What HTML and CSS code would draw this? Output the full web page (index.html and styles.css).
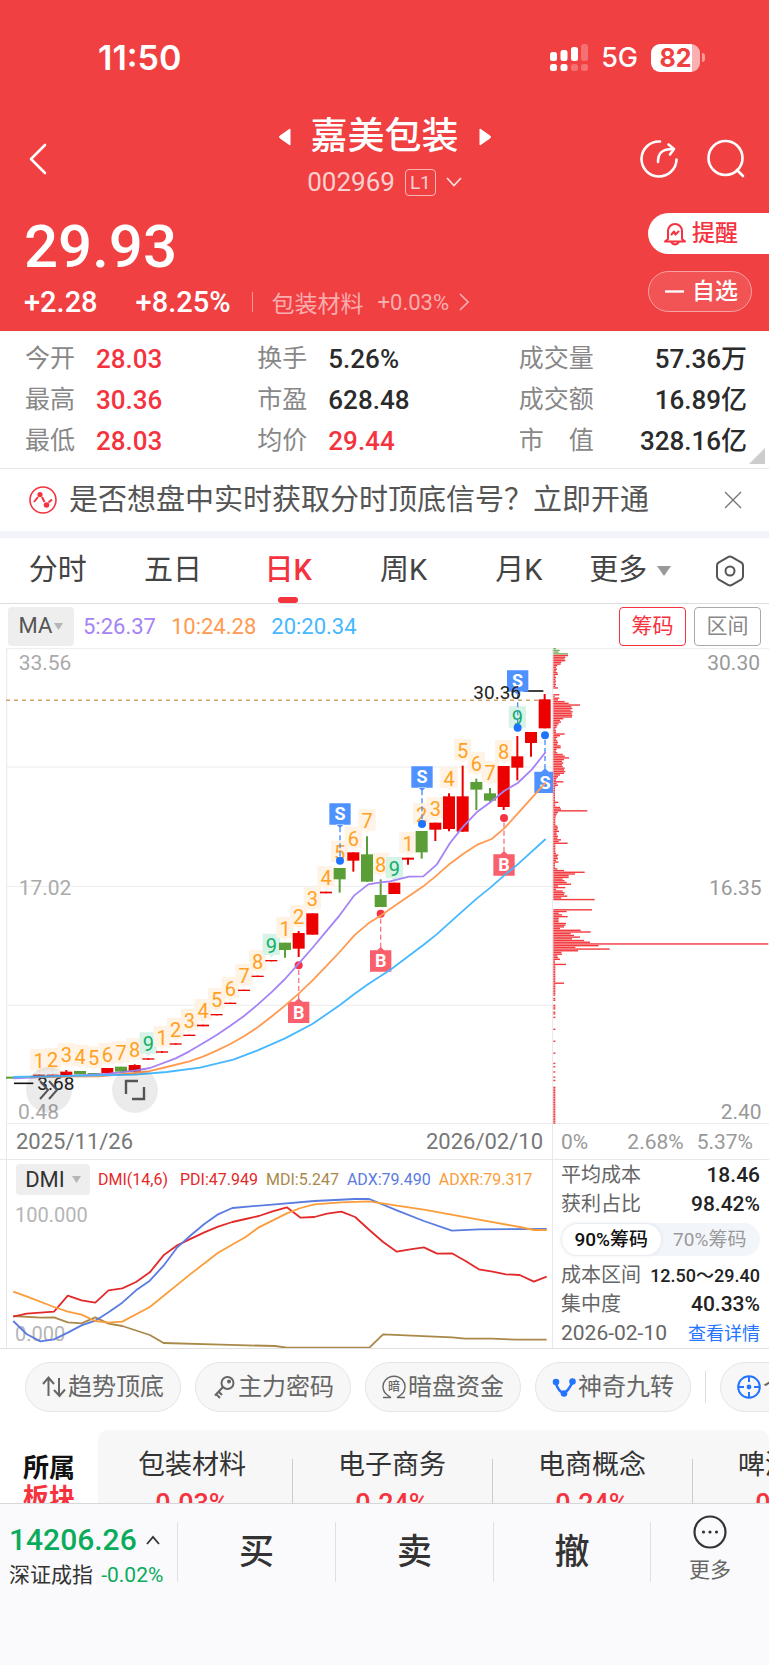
FILE: index.html
```html
<!DOCTYPE html>
<html lang="zh-CN">
<head>
<meta charset="utf-8">
<meta name="viewport" content="width=device-width, initial-scale=1">
<title>嘉美包装 002969</title>
<link rel="stylesheet" href="styles.css">
</head>
<body>
<div class="app">
  <header class="header">
    <div class="status">
      <time class="clock">11:50</time>
      <div class="status-right">
        <svg width="38" height="28" viewBox="0 0 38 28" fill="#fff" aria-hidden="true">
          <rect x="0" y="8" width="7" height="9" rx="2.5"/><rect x="10.500" y="6" width="7" height="11" rx="2.500"/><rect x="21" y="3" width="7" height="14" rx="2.500"/><rect x="31" y="0" width="7" height="17" rx="2.500" opacity=".25"/>
          <rect x="0" y="20" width="7" height="7" rx="2.500"/><rect x="10.500" y="20" width="7" height="7" rx="2.500"/><rect x="21" y="20" width="7" height="7" rx="2.500" opacity=".25"/><rect x="31" y="20" width="7" height="7" rx="2.500" opacity=".25"/>
        </svg>
        <span class="net">5G</span>
        <span class="battery">82</span>
      </div>
    </div>

    <div class="nav">
      <button class="icon-btn back" aria-label="返回"><svg width="18" height="32" viewBox="0 0 18 32"><path d="M16 2 2 16 16 30" fill="none" stroke="#fff" stroke-width="2.600" stroke-linecap="round" stroke-linejoin="round"/></svg></button>
      <div class="title-box">
        <div class="title-row">
          <button class="icon-btn" aria-label="上一只"><svg width="12" height="18" viewBox="0 0 12 18"><path d="M11 1v16L1 10q-1-1 0-2z" fill="#fff" stroke="#fff" stroke-linejoin="round"/></svg></button>
          <h1 class="title">嘉美包装</h1>
          <button class="icon-btn" aria-label="下一只"><svg width="12" height="18" viewBox="0 0 12 18"><path d="M1 1v16l10-7q1-1 0-2z" fill="#fff" stroke="#fff" stroke-linejoin="round"/></svg></button>
        </div>
        <div class="code-row">
          <span class="code">002969</span><span class="level">L1</span>
          <svg width="16" height="10" viewBox="0 0 16 10"><path d="M1 1l7 7.500L15 1" fill="none" stroke="#fff" stroke-width="1.600" opacity=".85"/></svg>
        </div>
      </div>
      <div class="nav-actions">
        <button class="icon-btn" aria-label="分享"><svg width="38" height="38" viewBox="0 0 38 38" fill="none" stroke="#fff" stroke-width="2.600" stroke-linecap="round" stroke-linejoin="round"><path d="M20 1.500A17.500 17.500 0 1 0 36.500 19.500"/><path d="M18 22c0-9 4-13 15-13"/><path d="M28.500 4.500 34 9l-4 5.500"/></svg></button>
        <button class="icon-btn" aria-label="搜索"><svg width="38" height="40" viewBox="0 0 38 40" fill="none" stroke="#fff" stroke-width="2.600" stroke-linecap="round"><circle cx="18.500" cy="19" r="17"/><path d="m30 31 6 6"/></svg></button>
      </div>
    </div>

    <div class="quote">
      <div class="quote-main">
        <div class="price">29.93</div>
        <div class="change-row">
          <span class="change">+2.28</span><span class="change">+8.25%</span>
          <a class="sector" href="#sector"><span class="sector-name">包装材料</span><span>+0.03%</span><svg width="10" height="18" viewBox="0 0 10 18"><path d="m1 1 8 8-8 8" fill="none" stroke="currentColor" stroke-width="1.600"/></svg></a>
        </div>
      </div>
      <div class="quote-actions">
        <button class="remind"><svg width="22" height="24" viewBox="0 0 22 24" fill="none" stroke="#f5333f" stroke-width="2" stroke-linejoin="round" stroke-linecap="round"><path d="M4 17V9a7 7 0 0 1 14 0v8l3 2.500H1z"/><path d="M7.500 20.500q3.500 4 7 0M7.500 12.500l2.500-3 1.500 3 3-3"/></svg>提醒</button>
        <button class="watch"><svg width="19" height="3" viewBox="0 0 19 3"><path d="M0 1.500h19" stroke="#fff" stroke-width="2.400"/></svg>自选</button>
      </div>
    </div>
  </header>

  <main class="main">
    <dl class="stats">
      <div class="stat"><dt>今开</dt><dd class="up">28.03</dd></div>
      <div class="stat"><dt>换手</dt><dd>5.26%</dd></div>
      <div class="stat wide"><dt>成交量</dt><dd>57.36万</dd></div>
      <div class="stat"><dt>最高</dt><dd class="up">30.36</dd></div>
      <div class="stat"><dt>市盈</dt><dd>628.48</dd></div>
      <div class="stat wide"><dt>成交额</dt><dd>16.89亿</dd></div>
      <div class="stat"><dt>最低</dt><dd class="up">28.03</dd></div>
      <div class="stat"><dt>均价</dt><dd class="up">29.44</dd></div>
      <div class="stat wide"><dt>市　值</dt><dd>328.16亿</dd></div>
    </dl>

    <div class="notice">
      <svg width="28" height="28" viewBox="0 0 28 28" fill="none" stroke="#f5333f" stroke-width="1.600"><circle cx="14" cy="14" r="13"/><path d="m5 16 4-5M13 11l2.500 5M19.500 16.500 23 13.500" stroke-width="2"/><circle cx="11" cy="8.500" r="1.800" fill="#f5333f"/><circle cx="17.500" cy="19" r="2" fill="#f5333f"/></svg>
      <a class="notice-text" href="#open">是否想盘中实时获取分时顶底信号？立即开通</a>
      <button class="icon-btn" aria-label="关闭"><svg width="18" height="18" viewBox="0 0 18 18"><path d="m1 1 16 16M17 1 1 17" stroke="#777" stroke-width="1.400"/></svg></button>
    </div>

    <nav class="tabs">
      <button class="tab">分时</button>
      <button class="tab">五日</button>
      <button class="tab active">日K</button>
      <button class="tab">周K</button>
      <button class="tab">月K</button>
      <button class="tab more">更多<svg width="14" height="10" viewBox="0 0 14 10"><path d="M0 0h14L7 10z" fill="#999"/></svg></button>
      <button class="tab" aria-label="设置"><svg width="30" height="32" viewBox="0 0 30 32" fill="none" stroke="#555" stroke-width="2" stroke-linejoin="round"><path d="M13 2.200q2-1.200 4 0l9.500 5.500q1.500 1 1.500 3v10.600q0 2-1.500 3L17 29.800q-2 1.200-4 0l-9.500-5.500q-1.500-1-1.500-3V10.700q0-2 1.500-3z"/><circle cx="15" cy="16" r="4.500"/></svg></button>
    </nav>

    <div class="ma-row">
      <button class="drop">MA<svg width="9" height="7" viewBox="0 0 9 7"><path d="M0 0h9L4.500 7z" fill="#b5b5b5"/></svg></button>
      <span class="ma5">5:26.37</span><span class="ma10">10:24.28</span><span class="ma20">20:20.34</span>
      <div class="ma-actions"><button class="outline on">筹码</button><button class="outline">区间</button></div>
    </div>

    <section class="kline">
      <svg class="chart" id="kline" viewBox="0 0 769 476" role="img" aria-label="日K线与筹码分布"></svg>
      <button class="round first" aria-label="快进"><svg width="22" height="22" viewBox="0 0 22 22"><path d="m2 2 8 9-8 9M11 2l8 9-8 9" fill="none" stroke="#555" stroke-width="2"/></svg></button>
      <button class="round second" aria-label="全屏"><svg width="22" height="22" viewBox="0 0 22 22"><path d="M14 2H2v13M20 8v12H8" fill="none" stroke="#555" stroke-width="2.400"/></svg></button>
    </section>

    <div class="split axis">
      <div class="dates"><span>2025/11/26</span><span>2026/02/10</span></div>
      <div class="percents"><span>0%</span><span class="mid">2.68%</span><span>5.37%</span></div>
    </div>

    <div class="split lower">
      <section class="dmi">
        <div class="dmi-head">
          <button class="drop small">DMI<svg width="9" height="7" viewBox="0 0 9 7"><path d="M0 0h9L4.500 7z" fill="#b5b5b5"/></svg></button>
          <span class="c-red">DMI(14,6)</span><span class="c-red wide-gap">PDI:47.949</span><span class="c-brown">MDI:5.247</span><span class="c-blue">ADX:79.490</span><span class="c-orange">ADXR:79.317</span>
        </div>
        <svg class="chart dmi-chart" id="dmi" viewBox="0 0 545 188" role="img" aria-label="DMI指标"></svg>
      </section>
      <section class="chips">
        <div class="chip-row"><span>平均成本</span><b>18.46</b></div>
        <div class="chip-row"><span>获利占比</span><b>98.42%</b></div>
        <div class="switch"><button class="on">90%筹码</button><button>70%筹码</button></div>
        <div class="chip-row"><span>成本区间</span><b class="range">12.50～29.40</b></div>
        <div class="chip-row"><span>集中度</span><b>40.33%</b></div>
        <div class="chip-row"><span class="day">2026-02-10</span><a href="#detail">查看详情</a></div>
      </section>
    </div>

    <div class="pills">
      <button class="pill"><svg width="24" height="24" viewBox="0 0 24 24" fill="none" stroke="#666" stroke-width="2"><path d="M6.500 21V3M1 9l5.500-6.500L12 9M17 3v18M12 15l5.500 6L23 14.500"/></svg>趋势顶底</button>
      <button class="pill"><svg width="24" height="24" viewBox="0 0 24 24" fill="none" stroke="#666" stroke-width="2"><circle cx="15.500" cy="8" r="6"/><circle cx="17" cy="6.500" r="1" fill="#666"/><path d="M11 12 3 20.500M6.500 16.500l3.500 3.500M3.500 18.500 8 23"/></svg>主力密码</button>
      <button class="pill"><svg width="24" height="24" viewBox="0 0 24 24" fill="none" stroke="#666" stroke-width="1.400"><path d="M6 20.500a11 10.500 0 1 1 12 0M1 22.500h8M15 22.500h8M6 20.500l3 2M18 20.500l-3 2"/><text x="12" y="16" text-anchor="middle" class="icon-text">暗</text></svg>暗盘资金</button>
      <button class="pill"><svg width="24" height="24" viewBox="0 0 24 24" fill="none" stroke="#2474ff" stroke-width="2.600"><path d="M4 8.500Q6 16 12 18.500 17 15 20.500 7"/><circle cx="4" cy="7" r="2" fill="#2474ff"/><circle cx="12" cy="18.500" r="2" fill="#2474ff"/><circle cx="20.500" cy="6.500" r="2" fill="#2474ff"/></svg>神奇九转</button>
      <i class="pill-line"></i>
      <button class="pill"><svg width="24" height="24" viewBox="0 0 24 24" fill="none" stroke="#2474ff" stroke-width="2"><circle cx="12" cy="12" r="10.800"/><path d="M12 1v6M12 17v6M1 12h6M17 12h6"/><circle cx="12" cy="12" r="1.400" fill="#2474ff"/></svg>个股诊断</button>
    </div>

    <section class="boards" id="sector">
      <h2 class="boards-title">所属<span>板块</span></h2>
      <div class="boards-card">
        <div class="board"><span>包装材料</span><b>0.03%</b></div>
        <div class="board"><span>电子商务</span><b>0.24%</b></div>
        <div class="board"><span>电商概念</span><b>0.24%</b></div>
        <div class="board"><span>啤酒概念</span><b>0.24%</b></div>
      </div>
    </section>
  </main>

  <footer class="footer">
    <button class="index">
      <span class="index-value">14206.26<svg width="14" height="10" viewBox="0 0 14 10"><path d="m1 9 6-7 6 7" fill="none" stroke="#333" stroke-width="1.800"/></svg></span>
      <span class="index-name">深证成指 <em>-0.02%</em></span>
    </button>
    <button class="trade">买</button>
    <button class="trade">卖</button>
    <button class="trade">撤</button>
    <button class="foot-more"><svg width="34" height="34" viewBox="0 0 34 34"><circle cx="17" cy="17" r="15.500" fill="none" stroke="#333" stroke-width="2.200"/><g fill="#333"><circle cx="10.500" cy="17" r="1.600"/><circle cx="17" cy="17" r="1.600"/><circle cx="23.500" cy="17" r="1.600"/></g></svg>更多</button>
  </footer>
</div>
<script src="charts.js"></script>
</body>
</html>
```

FILE: styles.css
```css
* { box-sizing: border-box; }

body {
  margin: 0;
  background: #fff;
  color: #333;
  font-family: Roboto, "Noto Sans CJK SC", sans-serif;
}

button {
  margin: 0;
  padding: 0;
  border: 0;
  background: none;
  color: inherit;
  font: inherit;
  line-height: 1;
}

a { color: inherit; text-decoration: none; }
svg { display: block; flex: none; }

.app { display: flex; flex-direction: column; height: 100vh; }

/* header */
.header { flex: none; background: #f04042; color: #fff; padding-bottom: 8px; }

.status {
  display: flex;
  justify-content: space-between;
  align-items: center;
  padding: 38px 69px 0 98px;
  height: 78px;
  font-family: Inter, sans-serif;
}
.clock { font-size: 34px; line-height: 40px; font-weight: 600; }
.status-right { display: flex; align-items: center; gap: 13px; }
.net { font-size: 27px; line-height: 32px; font-weight: 500; }
.battery {
  position: relative;
  width: 49px;
  height: 28px;
  border-radius: 9px;
  background: linear-gradient(90deg, #fff 84%, #f9b0b0 84%);
  color: #f04042;
  font-size: 25px;
  line-height: 28px;
  font-weight: 700;
  text-align: center;
}
.battery::after {
  content: "";
  position: absolute;
  right: -5px;
  top: 9px;
  width: 3px;
  height: 9px;
  border-radius: 0 4px 4px 0;
  background: #f79a9b;
}

.nav {
  display: grid;
  grid-template-columns: 1fr auto 1fr;
  align-items: center;
  padding: 34px 24px 0;
}
.icon-btn { display: flex; }
.back { padding-left: 5px; }
.back, .nav-actions { padding-top: 4px; }
.title-box { display: flex; flex-direction: column; align-items: center; }
.title-row { display: flex; align-items: center; gap: 20px; }
.title { margin: 0; font-size: 37px; line-height: 50px; font-weight: 500; }
.code-row { display: flex; align-items: center; gap: 10px; line-height: 40px; }
.code { font-size: 26px; color: #fbd0d0; }
.level {
  border: 1px solid #f9b5b5;
  border-radius: 4px;
  padding: 0 4px;
  font-size: 19px;
  line-height: 25px;
  color: #fbd0d0;
}
.nav-actions { display: flex; justify-content: flex-end; align-items: center; gap: 29px; }

.quote { display: flex; justify-content: space-between; padding-left: 24px; margin-top: 11px; }
.price { font-size: 60px; line-height: 68px; font-weight: 500; }
.change-row { display: flex; align-items: center; gap: 38px; height: 42px; }
.change { font-size: 29px; line-height: 42px; font-weight: 500; }
.change-row .sector { margin-left: -17px; }
.sector {
  display: flex;
  align-items: center;
  border-left: 1px solid #f79a9b;
  padding-left: 19px;
  gap: 10px;
  height: 20px;
  font-size: 22px;
  color: #f9adae;
}
.sector-name { font-size: 23px; margin-right: 4px; }
.quote-actions { display: flex; flex-direction: column; gap: 17px; width: 121px; }
.remind, .watch {
  display: flex;
  align-items: center;
  gap: 6px;
  height: 41px;
  padding-left: 16px;
  font-size: 23px;
  font-weight: 500;
}
.remind { background: #fff; color: #f5333f; border-radius: 21px 0 0 21px; }
.watch {
  width: 104px;
  gap: 8px;
  border: 1px solid #f8a2a3;
  border-radius: 21px;
  background: #f25355;
}

/* body */
.main { flex: 1; min-height: 0; overflow: hidden; display: flex; flex-direction: column; }
.main > * { flex: none; }

.stats {
  position: relative;
  display: grid;
  grid-template-columns: 232fr 261fr 228fr;
  row-gap: 1px;
  margin: 0;
  padding: 8px 22px 7px 25px;
  border-bottom: 1px solid #e8e8e8;
}
.stats::after {
  content: "";
  position: absolute;
  right: 4px;
  bottom: 4px;
  border-left: 16px solid transparent;
  border-bottom: 16px solid #ccc;
}
.stat { display: flex; align-items: center; gap: 21px; height: 40px; }
.stat.wide { justify-content: space-between; }
.stat dt { font-size: 25px; line-height: 36px; color: #888; }
.stat dd { margin: 0; font-size: 26px; line-height: 36px; font-weight: 500; color: #2b2b2b; }
.stat .up { color: #f5333f; }

.notice {
  display: flex;
  align-items: center;
  gap: 12px;
  height: 69px;
  padding: 0 27px 0 29px;
  border-bottom: 7px solid #f2f4f9;
}
.notice-text { flex: 1; font-size: 29px; line-height: 40px; color: #555; white-space: nowrap; }

.tabs {
  display: grid;
  grid-template-columns: repeat(5, 115fr) 115fr 77fr;
  height: 66px;
  border-bottom: 1px solid #ddd;
}
.tab {
  position: relative;
  display: flex;
  align-items: center;
  justify-content: center;
  font-size: 29px;
  color: #444;
}
.tab.more { gap: 10px; padding-right: 8px; }
.tab.active { color: #f5333f; font-weight: 500; }
.tab.active::after {
  content: "";
  position: absolute;
  bottom: 0;
  width: 20px;
  height: 6px;
  border-radius: 3px;
  background: #f5333f;
}

.ma-row { display: flex; align-items: center; gap: 15px; height: 44px; padding: 0 8px; font-size: 22px; }
.drop {
  display: flex;
  align-items: center;
  justify-content: center;
  gap: 2px;
  width: 66px;
  height: 39px;
  margin-right: -6px;
  border-radius: 4px;
  background: #eee;
  color: #555;
}
.ma5 { color: #a583f5; }
.ma10 { color: #ff9a50; }
.ma20 { color: #45b8ff; }
.ma-actions { display: flex; gap: 8px; margin-left: auto; }
.outline {
  width: 67px;
  height: 39px;
  border: 1px solid #aaa;
  border-radius: 4px;
  color: #888;
  font-size: 21px;
}
.outline.on { border-color: #f5333f; color: #f5333f; }

.kline { position: relative; }
.chart { width: 100%; height: auto; }
.round {
  position: absolute;
  bottom: 11px;
  display: flex;
  align-items: center;
  justify-content: center;
  width: 46px;
  height: 46px;
  border-radius: 50%;
  background: rgba(0, 0, 0, .08);
}
.round.first { left: 26px; }
.round.second { left: 112px; }

.axis-text { font-size: 21px; fill: #aaa; }
.axis-text.dark { fill: #999; }
.axis-small { font-size: 20px; fill: #b5b5b5; }
.extreme { font-size: 19px; fill: #222; }
.count { font-size: 20px; fill: #ffa01e; text-anchor: middle; }
.count.nine { fill: #12b066; }
.flag { font-size: 18px; font-weight: 700; fill: #fff; text-anchor: middle; }
.icon-text { font-size: 12px; font-weight: 500; fill: #666; stroke: none; }
.end { text-anchor: end; }

.split { display: grid; grid-template-columns: 553fr 216fr; }
.axis { font-size: 22px; line-height: 34px; border-bottom: 1px solid #e8e8e8; }
.dates {
  display: flex;
  justify-content: space-between;
  margin-left: 6px;
  padding: 1px 9px 0;
  border-left: 1px solid #e8e8e8;
  border-right: 1px solid #e8e8e8;
  color: #777;
}
.percents { display: flex; padding: 1px 16px 0 8px; gap: 13px; font-size: 21px; color: #999; }
.percents .mid { margin-left: auto; }

.dmi {
  position: relative;
  margin-left: 6px;
  border-left: 1px solid #e8e8e8;
  border-right: 1px solid #e8e8e8;
}
.lower { border-bottom: 1px solid #e0e0e0; }
.dmi-head {
  position: absolute;
  left: 9px;
  top: 4px;
  display: flex;
  align-items: center;
  gap: 8px;
  font-size: 16px;
  white-space: nowrap;
}
.drop.small { width: 74px; height: 31px; gap: 7px; margin-right: 0; font-size: 22px; color: #333; }
.wide-gap { margin-left: 4px; }
.c-red { color: #e32a2a; }
.c-brown { color: #a9884a; }
.c-blue { color: #5a7be0; }
.c-orange { color: #fa9d3a; }

.chips { padding: 1px 9px 0 8px; font-size: 20px; }
.chip-row {
  display: flex;
  align-items: center;
  justify-content: space-between;
  height: 29px;
  line-height: 29px;
  color: #666;
  white-space: nowrap;
}
.chip-row b { font-size: 21px; font-weight: 500; color: #222; }
.chip-row .range { font-size: 18px; }
.chip-row .day { font-size: 21px; }
.chip-row a { font-size: 18px; color: #2474ff; }
.switch {
  display: grid;
  grid-template-columns: 1fr 1fr;
  height: 33px;
  margin: 4px 0 5px;
  padding: 1px;
  border-radius: 17px;
  background: #f2f5f9;
}
.switch button { border-radius: 16px; font-size: 19px; color: #999; }
.switch .on { background: #fff; color: #111; font-weight: 500; box-shadow: 0 0 4px #dde1e8; }

.pills { display: flex; align-items: center; gap: 14px; padding: 13px 0 18px 25px; overflow: hidden; }
.pill {
  display: flex;
  flex: none;
  align-items: center;
  gap: 2px;
  height: 50px;
  padding: 0 16px;
  border: 1px solid #e5e5e5;
  border-radius: 25px;
  background: #f7f7f7;
  color: #666;
  font-size: 24px;
}
.pill-line { flex: none; width: 1px; height: 32px; background: #ddd; }

.boards { display: flex; }
.boards-title {
  flex: none;
  width: 98px;
  margin: 0;
  padding: 23px 0 0 23px;
  font-size: 26px;
  line-height: 30px;
  font-weight: 700;
  color: #111;
}
.boards-title span { display: block; color: #f5333f; }
.boards-card { display: flex; flex: 1; min-width: 0; overflow: hidden; border-radius: 10px; background: #f7f7f7; }
.board {
  position: relative;
  display: flex;
  flex: 0 0 200px;
  flex-direction: column;
  align-items: center;
  padding: 16px 0 12px;
  font-size: 27px;
  line-height: 39px;
}
.board:first-child { flex-basis: 194px; padding-right: 6px; }
.board + .board::before {
  content: "";
  position: absolute;
  left: 0;
  top: 29px;
  bottom: 24px;
  width: 1px;
  background: #ccc;
}
.board b { font-weight: 500; color: #f5333f; }

/* footer */
.footer {
  display: grid;
  grid-template-columns: 177fr 158fr 158fr 157fr 119fr;
  grid-template-rows: 60px;
  flex: none;
  height: 162px;
  padding-top: 18px;
  border-top: 1px solid #d8d8da;
  background: #fafafc;
}
.footer button + button { border-left: 1px solid #e0e0e2; }
.index { display: flex; flex-direction: column; align-items: flex-start; padding-left: 9px; text-align: left; white-space: nowrap; }
.index-value { display: flex; align-items: center; gap: 9px; font-size: 30px; line-height: 36px; font-weight: 500; color: #0bab5c; }
.index-name { font-size: 21px; line-height: 34px; }
.index-name em { margin-left: 3px; font-style: normal; color: #0bab5c; }
.trade { font-size: 35px; font-weight: 500; }
.foot-more { display: flex; flex-direction: column; align-items: center; gap: 11px; font-size: 21px; color: #666; }
.foot-more svg { margin-top: -7px; }
```

FILE: charts.js
```js
const NS = 'http://www.w3.org/2000/svg';

function add(parent, name, attrs, text) {
  const el = document.createElementNS(NS, name);
  for (const key in attrs) el.setAttribute(key, attrs[key]);
  if (text !== undefined) el.textContent = text;
  parent.appendChild(el);
  return el;
}

/* Source data is stored in thirds of a pixel, with the plot starting at y = 21. */
const X = v => v / 3;
const Y = v => (v - 21) / 3;
const RED = '#ec0000';
const GREEN = '#5b9e38';

function drawKline() {
  const svg = document.getElementById('kline');
  const line = (x1, y1, x2, y2, stroke, width, dash) => add(svg, 'line', {
    x1: X(x1), y1: Y(y1), x2: X(x2), y2: Y(y2), stroke, 'stroke-width': width || 1,
    ...(dash ? { 'stroke-dasharray': dash } : {})
  });
  const label = (x, y, cls, text) => add(svg, 'text', { x: X(x), y: Y(y), class: cls }, text);

  for (const y of [23, 378, 736, 1093]) line(20, y, 1658, y, '#ececec');
  line(1658, 23, 2307, 23, '#ececec');
  line(20, 1448, 2307, 1448, '#e8e8e8');
  line(20, 21, 20, 1449, '#e8e8e8');
  line(1658, 21, 1658, 1449, '#e8e8e8');

  label(56, 88, 'axis-text', '33.56');
  label(56, 762, 'axis-text', '17.02');
  label(54, 1434, 'axis-text', '0.48');
  label(2280, 88, 'axis-text dark end', '30.30');
  label(2285, 762, 'axis-text dark end', '16.35');
  label(2285, 1434, 'axis-text dark end', '2.40');
  line(18, 178, 1640, 178, '#cfa46b', 1.5, '4 4');

  /* colour, high, body top, body bottom, low, count, count centre */
  const candles = [
    ['r', 1301, 1301, 1305, 1305, 1, 1260], ['r', 1301, 1301, 1305, 1305, 2, 1257],
    ['r', 1287, 1292, 1304, 1304, 3, 1243], ['g', 1290, 1290, 1300, 1300, 4, 1247],
    ['g', 1296, 1296, 1302, 1302, 5, 1252], ['r', 1281, 1281, 1297, 1297, 6, 1241],
    ['g', 1277, 1277, 1292, 1292, 7, 1237], ['r', 1270, 1272, 1292, 1292, 8, 1227],
    ['r', 1252, 1252, 1256, 1256, 9, 1210], ['r', 1231, 1231, 1235, 1235, 1, 1190],
    ['r', 1207, 1207, 1211, 1211, 2, 1166], ['r', 1181, 1181, 1185, 1185, 3, 1140],
    ['r', 1151, 1151, 1156, 1156, 4, 1110], ['r', 1119, 1119, 1123, 1123, 5, 1077],
    ['r', 1085, 1085, 1089, 1089, 6, 1044], ['r', 1046, 1046, 1050, 1050, 7, 1004],
    ['r', 1004, 1004, 1008, 1008, 8, 962], ['r', 957, 957, 961, 961, 9, 914],
    ['g', 905, 905, 927, 950, 1, 863], ['r', 870, 876, 923, 948, 2, 828],
    ['r', 817, 817, 881, 881, 3, 775], ['r', 752, 752, 757, 757, 4, 711],
    ['g', 681, 681, 715, 755, 5, 635], ['r', 634, 634, 659, 692, 6, 593],
    ['g', 586, 640, 722, 722, 7, 541], ['g', 715, 762, 798, 798, 8, 671],
    ['r', 725, 725, 759, 759, 9, 684], ['r', 650, 650, 656, 671, 1, 609],
    ['g', 570, 570, 634, 653, 2, 522], ['r', 545, 545, 566, 600, 3, 505],
    ['r', 457, 466, 564, 571, 4, 413], ['r', 374, 466, 572, 572, 5, 330],
    ['g', 413, 423, 446, 507, 6, 369], ['g', 441, 457, 479, 482, 7, 397],
    ['r', 375, 375, 498, 507, 8, 333], ['r', 285, 346, 380, 418, 9, 232],
    ['r', 273, 273, 306, 347], ['r', 159, 175, 262, 262]
  ];
  const cx = i => 117 + 41 * i;

  candles.forEach((c, i) => {
    if (!c[5]) return;
    const x = cx(i), y = c[6], fill = c[5] === 9 ? '#d7f2e6' : '#fff3e5';
    add(svg, 'path', {
      d: `M${X(x - 26)} ${Y(y - 36)}H${X(x + 26)}V${Y(y + 28)}H${X(x + 8)}L${X(x)} ${Y(y + 35)}L${X(x - 8)} ${Y(y + 28)}H${X(x - 26)}Z`,
      fill
    });
  });
  candles.forEach((c, i) => {
    const x = cx(i), color = c[0] === 'r' ? RED : GREEN;
    if (c[5]) label(x, c[6] + 21, c[5] === 9 ? 'count nine' : 'count', c[5]);
    if (c[4] > c[1]) line(x, c[1], x, c[4], color, 2);
    add(svg, 'rect', { x: X(x - 18), y: Y(c[2]), width: 12, height: (c[3] - c[2]) / 3, fill: color });
  });
  line(18, 1310, 60, 1310, GREEN, 2);

  line(42, 1327, 100, 1327, '#111', 1.6);
  label(112, 1348, 'extreme', '3.68');
  line(1572, 150, 1630, 150, '#111', 1.6);

  /* x, flag centre, dot centre, letter */
  const marks = [
    [1020, 519, 659, 'S'], [1266, 408, 549, 'S'], [1553, 120, 260, 'S'], [1635, 424, 283, 'S'],
    [896, 1114, 973, 'B'], [1142, 960, 818, 'B'], [1512, 672, 531, 'B']
  ];
  for (const [x, y, dot, letter] of marks) {
    const sell = letter === 'S', color = sell ? '#4f92ff' : '#fa5f6c';
    const dir = dot > y ? 1 : -1;
    line(x, y + 40 * dir, x, dot, sell ? '#4f92ff' : '#fa7c86', 1.4, '5 3');
    add(svg, 'circle', { cx: X(x), cy: Y(dot), r: 4, fill: sell ? '#1c74ff' : '#f53446' });
    const right = Math.min(x + 32, 1659);
    add(svg, 'path', {
      d: `M${X(x - 32)} ${Y(y - 32)}H${X(right)}V${Y(y + 32)}H${X(x - 32)}ZM${X(x - 12)} ${Y(y + 31 * dir)}L${X(x)} ${Y(y + 42 * dir)}L${X(x + 12)} ${Y(y + 31 * dir)}Z`,
      fill: color
    });
    label(x, y + 19, 'flag', letter);
  }
  label(1420, 173, 'extreme', '30.36');

  const averages = [
    ['#a583f5', '40,1312 200,1305 322,1299 404,1289 450,1281 527,1252 568,1231 609,1207 650,1182 691,1154 732,1125 773,1091 814,1054 855,1014 896,968 937,921 978,872 1019,823 1063,763 1105,730 1142,724 1170,721 1227,707 1270,706 1310,671 1350,606 1390,556 1430,514 1471,484 1512,450 1553,426 1596,385 1637,333'],
    ['#ff9a50', '40,1308 300,1306 404,1296 445,1291 500,1278 568,1261 609,1247 650,1229 691,1209 732,1186 773,1159 814,1127 855,1094 896,1058 937,1019 978,976 1019,933 1063,883 1105,847 1142,824 1170,804 1227,765 1270,736 1310,703 1350,668 1390,638 1434,610 1475,594 1512,563 1553,518 1596,470 1637,425'],
    ['#45b8ff', '40,1308 404,1301 500,1293 600,1280 700,1256 773,1228 855,1192 937,1149 1019,1093 1063,1059 1105,1029 1170,987 1270,912 1310,880 1370,826 1430,773 1471,740 1512,704 1553,670 1637,594']
  ];
  for (const [stroke, pts] of averages) {
    const points = pts.split(' ').map(p => { const [x, y] = p.split(','); return X(x) + ',' + Y(y); }).join(' ');
    add(svg, 'polyline', { points, fill: 'none', stroke, 'stroke-width': 1.8, 'stroke-linejoin': 'round' });
  }

  /* chip distribution, one value per price step */
  const chips = [
    8, 19, 16, 44, 44, 36, 34, 36, 24, 22, 12, 8, 11, 8, 12, 14, 6, 8, 6, 8, 6, 8, 6, 14, 0, 0, 0, 18, 4, 18,
    14, 34, 46, 80, 54, 57, 52, 58, 55, 57, 56, 30, 20, 23, 16, 12, 10, 6, 8, 8, 34, 20, 12, 8, 12, 14, 12, 22, 22, 10,
    8, 12, 28, 34, 47, 32, 26, 30, 26, 28, 34, 32, 36, 32, 20, 14, 10, 8, 30, 10, 14, 6, 5, 5, 5, 5, 5, 5, 5, 5,
    15, 6, 6, 20, 23, 102, 14, 10, 8, 6, 6, 6, 6, 6, 12, 14, 12, 17, 10, 10, 14, 12, 23, 16, 43, 6, 6, 6, 6, 6,
    8, 15, 12, 14, 8, 15, 5, 5, 5, 12, 32, 94, 65, 46, 46, 28, 34, 40, 53, 14, 36, 8, 28, 34, 32, 42, 24, 124, 0, 0,
    0, 0, 0, 116, 40, 16, 26, 43, 16, 16, 16, 38, 36, 32, 20, 82, 112, 52, 62, 80, 56, 92, 110, 645, 136, 66, 169, 74, 24, 26,
    12, 14, 20, 5, 5, 38, 6, 6, 6, 6, 6, 6, 6, 6, 6, 6, 32, 6, 6, 6, 6, 6, 6, 6, 0, 6, 6, 0, 0, 6, 6, 6, 0, 6, 6, 0, 6
  ];
  for (const i of [223, 230, 237, 243, 245, 248, 251, 253]) chips[i] = 6;
  for (let i = 257; i < 279; i++) chips[i] = 6;
  chips.forEach((v, i) => {
    if (v) add(svg, 'rect', { x: X(1660), y: Y(21 + 5.12 * i), width: v / 3, height: 1.4, fill: i < 4 ? '#7fb069' : '#f23a3f' });
  });
}

function drawDmi() {
  const svg = document.getElementById('dmi');
  add(svg, 'text', { x: 8, y: 62, class: 'axis-small' }, '100.000');
  add(svg, 'text', { x: 8, y: 181, class: 'axis-small' }, '0.000');
  const series = [
    ['#a9884a', '27,614 82,619 110,618 138,633 166,636 194,618 221,637 249,644 305,671 333,695 450,700 560,704 584,709 752,709 780,669 920,678 947,682 1000,682 1050,685 1113,685'],
    ['#e32a2a', '27,616 54,607 82,604 110,601 138,553 166,567 194,574 221,537 249,531 277,512 305,483 333,432 361,402 389,382 416,363 444,346 473,332 500,323 527,314 555,300 584,288 612,319 640,317 666,307 695,301 723,317 752,356 780,392 808,421 835,414 863,408 890,427 920,426 947,448 975,474 1003,481 1030,489 1058,491 1087,511 1113,496'],
    ['#5a7be0', '27,629 54,668 82,690 110,684 138,664 166,642 194,628 221,603 249,574 277,537 305,508 333,463 361,408 389,371 416,338 444,309 473,290 560,279 640,269 723,263 752,263 808,297 863,329 920,358 975,354 1113,353'],
    ['#fa9d3a', '27,541 54,555 110,587 138,601 166,610 194,629 221,634 249,631 305,587 389,487 444,424 500,377 527,348 584,306 612,290 640,279 695,273 752,270 808,283 863,295 975,325 1058,347 1087,356 1113,356']
  ];
  for (const [stroke, pts] of series) {
    const points = pts.split(' ').map(p => {
      const [x, y] = p.split(',');
      return (x / 2.036 - 7) + ',' + (y - 146) / 3;
    }).join(' ');
    add(svg, 'polyline', { points, fill: 'none', stroke, 'stroke-width': 1.8, 'stroke-linejoin': 'round' });
  }
}

drawKline();
drawDmi();
```
